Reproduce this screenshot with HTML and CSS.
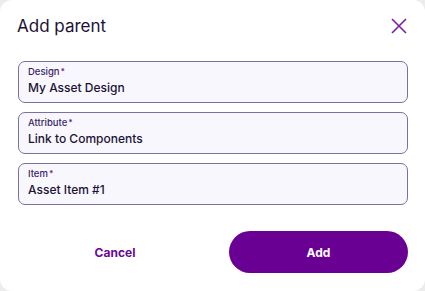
FILE: index.html
```html
<!DOCTYPE html>
<html lang="en">
<head>
    <meta charset="UTF-8">
    <meta name="viewport" content="width=device-width, initial-scale=1.0">
    <title>Add parent</title>
    <link rel="stylesheet" href="styles.css">
</head>
<body>
    <div class="dialog">
        <div class="dialog-header">
            <h1>Add parent</h1>
            <button class="close-btn" aria-label="Close">
                <svg width="16" height="16" viewBox="0 0 16 16">
                    <path d="M1 1 L15 15 M15 1 L1 15" stroke="#7b1fa2" stroke-width="1.6" fill="none"/>
                </svg>
            </button>
        </div>
        <div class="fields">
            <div class="field">
                <label>Design<span class="req">*</span></label>
                <div class="value">My Asset Design</div>
            </div>
            <div class="field">
                <label>Attribute<span class="req">*</span></label>
                <div class="value">Link to Components</div>
            </div>
            <div class="field">
                <label>Item<span class="req">*</span></label>
                <div class="value">Asset Item #1</div>
            </div>
        </div>
        <div class="dialog-footer">
            <button class="btn-cancel">Cancel</button>
            <button class="btn-add">Add</button>
        </div>
    </div>
</body>
</html>
```

FILE: styles.css
```css
body {
    margin: 0;
    padding: 0;
    background: #ececec;
    font-family: Inter, "Liberation Sans", sans-serif;
}
.dialog {
    width: 425px;
    height: 291px;
    box-sizing: border-box;
    background: #fff;
    border-radius: 12px;
    padding: 13px 17px 0 18px;
}
.dialog-header {
    display: flex;
    align-items: center;
    justify-content: space-between;
    height: 26px;
}
.dialog-header h1 {
    margin: 0 0 0 -1px;
    font-size: 17px;
    font-weight: 400;
    color: #1c1236;
}
.close-btn {
    border: none;
    background: none;
    padding: 0;
    margin-right: 1px;
    display: flex;
}
.fields {
    display: flex;
    flex-direction: column;
    gap: 9px;
    margin-top: 22px;
}
.field {
    height: 42px;
    box-sizing: border-box;
    border: 1px solid #7f6ea3;
    border-radius: 7px;
    background: #f7f7fd;
    padding: 3px 9px 0 9px;
}
.field label {
    display: block;
    font-size: 9.5px;
    line-height: 13px;
    color: #3a1f66;
    font-weight: 500;
}
.field .req {
    color: #7b1fa2;
    font-weight: 700;
    font-size: 8px;
    vertical-align: 1px;
    margin-left: 1px;
}
.field .value {
    font-size: 12px;
    line-height: 20px;
    color: #1c1236;
    font-weight: 500;
}
.dialog-footer {
    display: flex;
    align-items: center;
    margin-top: 26px;
}
.btn-cancel {
    flex: 1;
    border: none;
    background: none;
    font-family: inherit;
    font-size: 12px;
    font-weight: 700;
    color: #6a0794;
    padding: 0 17px 0 0;
}
.btn-add {
    width: 179px;
    height: 42px;
    border: none;
    border-radius: 21px;
    background: #690093;
    color: #fff;
    font-family: inherit;
    font-size: 12px;
    font-weight: 700;
}
```
